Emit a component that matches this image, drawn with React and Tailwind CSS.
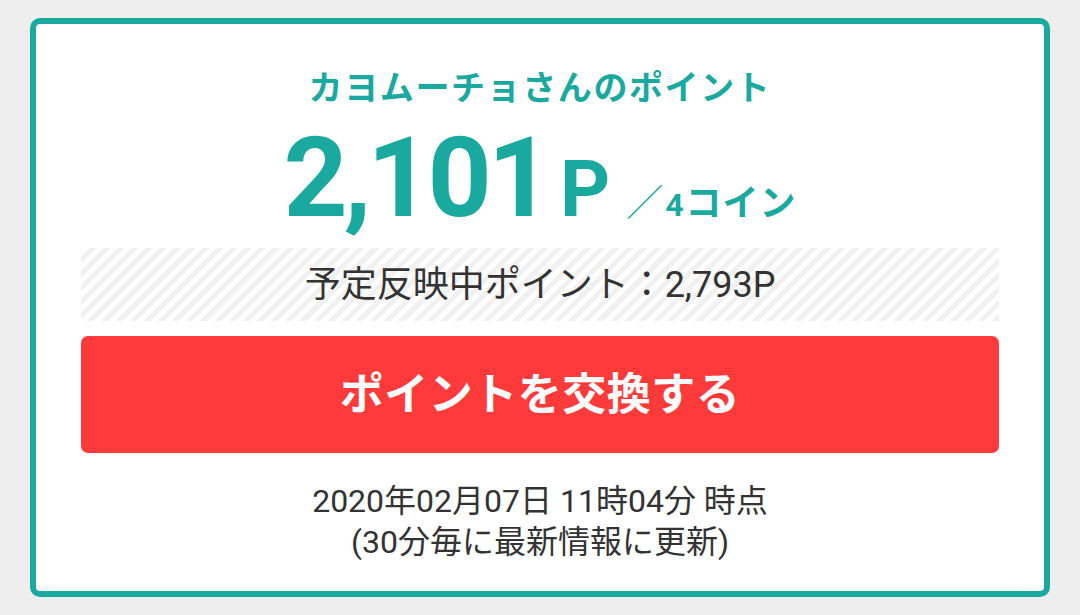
export default function App() {
  const jp = { fontFamily: 'Roboto, "Noto Sans CJK JP", sans-serif' };
  return (
    <div className="w-[1080px] h-[615px] bg-[#eeeeee] pt-[18px] px-[30px]" style={jp}>
      <div className="h-[579px] border-[6px] border-[#19a99f] rounded-[10px] bg-white px-[45px] pt-[44px] flex flex-col items-center">
        <div className="text-[34px] leading-[40px] font-bold text-[#19a99f] tracking-[1.6px]">
          カヨムーチョさんのポイント
        </div>
        <div className="flex items-baseline text-[#19a99f] mt-[20px] h-[100px] leading-[100px]">
          <span className="text-[112px] font-bold tracking-[-4px]">2,101</span>
          <span className="text-[78px] font-bold ml-[12px]">P</span>
          <span className="text-[37px] font-light ml-[16px]">／</span>
          <span className="text-[32px] font-bold ml-[2px]">4</span>
          <span className="text-[36px] font-bold tracking-[1px] ml-[2px]">コイン</span>
        </div>
        <div className="mt-[20px] w-full h-[73px] flex items-center justify-center bg-[repeating-linear-gradient(-45deg,#f1f1f1_0px,#f1f1f1_5px,#ffffff_5px,#ffffff_10px)] text-[36px] text-[#333333]">
          予定反映中ポイント：2,793P
        </div>
        <div className="mt-[15px] w-full h-[117px] flex items-center justify-center bg-[#ff3a3a] rounded-[7px] text-white text-[44px] font-bold tracking-[0.5px]">
          ポイントを交換する
        </div>
        <div className="mt-[28px] text-[#333333] text-[32px] leading-[41px] text-center">
          <div>2020年02月07日 11時04分 時点</div>
          <div>(30分毎に最新情報に更新)</div>
        </div>
      </div>
    </div>
  );
}
